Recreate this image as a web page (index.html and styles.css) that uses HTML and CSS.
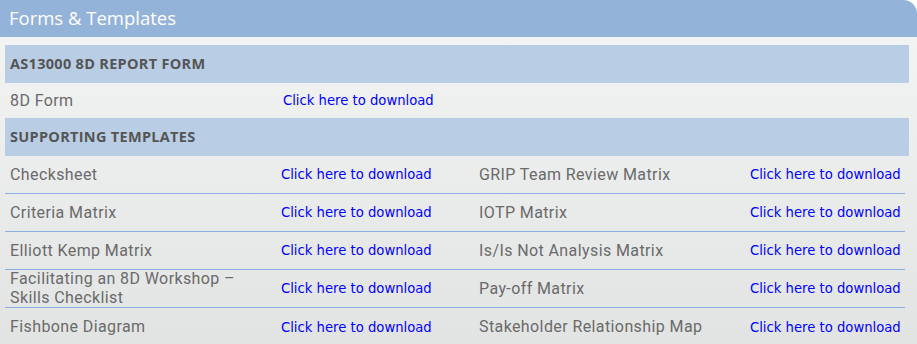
FILE: index.html
```html
<!DOCTYPE html>
<html>
<head>
<meta charset="utf-8">
<link rel="stylesheet" href="styles.css">
</head>
<body>
<div class="panel">
  <div class="title">Forms &amp; Templates</div>
  <div class="content">
    <div class="section">AS13000 8D REPORT FORM</div>
    <div class="grid first">
      <div class="label">8D Form</div>
      <div class="link"><a href="#">Click here to download</a></div>
    </div>
    <div class="section">SUPPORTING TEMPLATES</div>
    <div class="grid">
      <div class="label">Checksheet</div>
      <div class="link"><a href="#">Click here to download</a></div>
      <div class="label">GRIP Team Review Matrix</div>
      <div class="link"><a href="#">Click here to download</a></div>

      <div class="label">Criteria Matrix</div>
      <div class="link"><a href="#">Click here to download</a></div>
      <div class="label">IOTP Matrix</div>
      <div class="link"><a href="#">Click here to download</a></div>

      <div class="label">Elliott Kemp Matrix</div>
      <div class="link"><a href="#">Click here to download</a></div>
      <div class="label">Is/Is Not Analysis Matrix</div>
      <div class="link"><a href="#">Click here to download</a></div>

      <div class="label two">Facilitating an 8D Workshop –<br>Skills Checklist</div>
      <div class="link"><a href="#">Click here to download</a></div>
      <div class="label">Pay-off Matrix</div>
      <div class="link"><a href="#">Click here to download</a></div>

      <div class="label last">Fishbone Diagram</div>
      <div class="link last"><a href="#">Click here to download</a></div>
      <div class="label last">Stakeholder Relationship Map</div>
      <div class="link last"><a href="#">Click here to download</a></div>
    </div>
  </div>
</div>
</body>
</html>
```
FILE: styles.css
```css
html, body {
  margin: 0;
  padding: 0;
  background: #ffffff;
}
.panel {
  width: 917px;
  height: 344px;
  overflow: hidden;
  border-top-right-radius: 14px;
  background: linear-gradient(#f4f5f5, #e2e4e4);
}
.title {
  height: 37px;
  background: #94b3d8;
  color: #ffffff;
  font-family: "Open Sans", sans-serif;
  font-size: 18.5px;
  line-height: 35px;
  padding-left: 9px;
}
.content {
  padding: 8px 8px 0 5px;
}
.section {
  height: 38px;
  background: #b9cde5;
  color: #555555;
  font-family: "Open Sans", sans-serif;
  font-weight: 700;
  font-size: 14.5px;
  letter-spacing: 0.3px;
  line-height: 38px;
  padding-left: 5px;
}
.grid {
  display: grid;
  grid-template-columns: 271px 198px 271px 160px;
}
.grid.first {
  grid-template-columns: 273px 631px;
}
.label, .link {
  display: flex;
  align-items: center;
  box-sizing: border-box;
  height: 38px;
  border-bottom: 1px solid #8eaee2;
}
.first .label, .first .link {
  height: 35px;
  border-bottom: none;
}
.label {
  padding-left: 5px;
  padding-bottom: 1px;
  font-family: Roboto, sans-serif;
  font-size: 16px;
  letter-spacing: 0.4px;
  color: #6a6a6a;
}
.label.two {
  line-height: 19px;
}
.link {
  padding-left: 5px;
}
.link a {
  font-family: "DejaVu Sans", Verdana, sans-serif;
  font-size: 13.2px;
  color: #0000ff;
  text-decoration: none;
}
.last {
  border-bottom: none;
}
```
